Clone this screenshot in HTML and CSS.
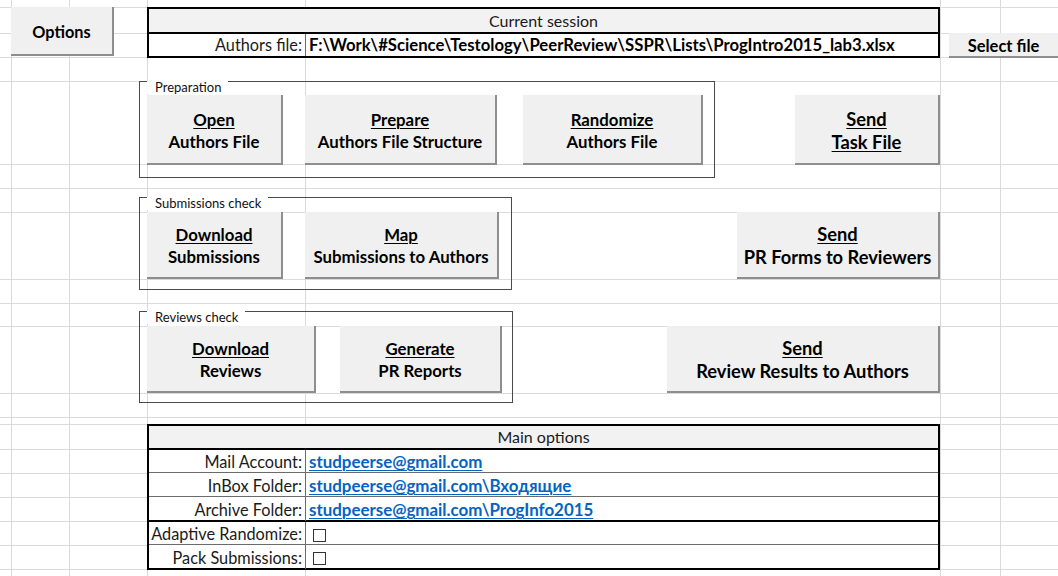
FILE: index.html
```html
<!DOCTYPE html>
<html lang="en">
<head>
<meta charset="utf-8">
<title>PeerReview – control sheet</title>
<link rel="stylesheet" href="styles.css">
</head>
<body>
<main class="sheet">

  <button class="btn btn-options" type="button">Options</button>

  <section class="session">
    <div class="head">Current session</div>
    <div class="row">
      <div class="label">Authors file:</div>
      <div class="value path">F:\Work\#Science\Testology\PeerReview\SSPR\Lists\ProgIntro2015_lab3.xlsx</div>
    </div>
  </section>

  <button class="btn btn-select" type="button">Select file</button>

  <!-- Preparation -->
  <div class="group group-prep">
    <span class="group-label">Preparation</span>
    <button class="btn btn-open" type="button"><u>Open</u><br>Authors File</button>
    <button class="btn btn-prepare" type="button"><u>Prepare</u><br>Authors File Structure</button>
    <button class="btn btn-randomize" type="button"><u>Randomize</u><br>Authors File</button>
  </div>
  <button class="btn btn-send btn-task" type="button"><u>Send</u><br><u>Task File</u></button>

  <!-- Submissions check -->
  <div class="group group-subm">
    <span class="group-label">Submissions check</span>
    <button class="btn btn-dl-subm" type="button"><u>Download</u><br>Submissions</button>
    <button class="btn btn-map" type="button"><u>Map</u><br>Submissions to Authors</button>
  </div>
  <button class="btn btn-send btn-forms" type="button"><u>Send</u><br>PR Forms to Reviewers</button>

  <!-- Reviews check -->
  <div class="group group-rev">
    <span class="group-label">Reviews check</span>
    <button class="btn btn-dl-rev" type="button"><u>Download</u><br>Reviews</button>
    <button class="btn btn-generate" type="button"><u>Generate</u><br>PR Reports</button>
  </div>
  <button class="btn btn-send btn-results" type="button"><u>Send</u><br>Review Results to Authors</button>

  <section class="opts">
    <div class="head">Main options</div>
    <div class="row r-thin">
      <div class="label">Mail Account:</div>
      <div class="value"><a class="link" href="#">studpeerse@gmail.com</a></div>
    </div>
    <div class="row r-thin r-tall">
      <div class="label">InBox Folder:</div>
      <div class="value"><a class="link" href="#">studpeerse@gmail.com\Входящие</a></div>
    </div>
    <div class="row r-thick r-tall">
      <div class="label">Archive Folder:</div>
      <div class="value"><a class="link" href="#">studpeerse@gmail.com\ProgInfo2015</a></div>
    </div>
    <div class="row r-thin">
      <div class="label">Adaptive Randomize:</div>
      <div class="value"><span class="check"></span></div>
    </div>
    <div class="row r-tall">
      <div class="label">Pack Submissions:</div>
      <div class="value"><span class="check"></span></div>
    </div>
  </section>

</main>
</body>
</html>
```

FILE: styles.css
```css
html, body {
  margin: 0;
  padding: 0;
  background: #fff;
}

/* worksheet: column widths and row heights of the sheet, gridlines drawn as hard-stop gradients */
.sheet {
  --grid: #dadada;
  position: relative;
  width: 1058px;
  height: 576px;
  overflow: hidden;
  display: grid;
  grid-template-columns: 11px 58px 78px 158px 635px 60px 58px;
  grid-template-rows: 7px 26px 24px 24px 83px 24px 24px 67px 24px 23px 67px 24px 7px 25px 24px 24px 24px 24px 24px 7px;
  font-family: "Lato", "Noto Sans", sans-serif;
  color: #111;
  background-color: #fff;
  background-image:
    linear-gradient(to right,
      transparent 11px, var(--grid) 11px 12px,
      transparent 12px 69px, var(--grid) 69px 70px,
      transparent 70px 147px, var(--grid) 147px 148px,
      transparent 148px 305px, var(--grid) 305px 306px,
      transparent 306px 940px, var(--grid) 940px 941px,
      transparent 941px 1000px, var(--grid) 1000px 1001px,
      transparent 1001px),
    linear-gradient(to bottom,
      transparent 7px, var(--grid) 7px 8px,
      transparent 8px 33px, var(--grid) 33px 34px,
      transparent 34px 57px, var(--grid) 57px 58px,
      transparent 58px 81px, var(--grid) 81px 82px,
      transparent 82px 164px, var(--grid) 164px 165px,
      transparent 165px 188px, var(--grid) 188px 189px,
      transparent 189px 212px, var(--grid) 212px 213px,
      transparent 213px 279px, var(--grid) 279px 280px,
      transparent 280px 303px, var(--grid) 303px 304px,
      transparent 304px 326px, var(--grid) 326px 327px,
      transparent 327px 393px, var(--grid) 393px 394px,
      transparent 394px 417px, var(--grid) 417px 418px,
      transparent 418px 424px, var(--grid) 424px 425px,
      transparent 425px 449px, var(--grid) 449px 450px,
      transparent 450px 473px, var(--grid) 473px 474px,
      transparent 474px 497px, var(--grid) 497px 498px,
      transparent 498px 521px, var(--grid) 521px 522px,
      transparent 522px 545px, var(--grid) 545px 546px,
      transparent 546px 569px, var(--grid) 569px 570px,
      transparent 570px);
}

/* ---------- form buttons ---------- */
.btn {
  box-sizing: border-box;
  margin: 0;
  padding: 0;
  border: 0;
  border-right: 2px solid #8e8e8e;
  border-bottom: 2px solid #8e8e8e;
  background: #f0f0f0;
  color: #000;
  font-family: "Lato", "Noto Sans", sans-serif;
  font-weight: 700;
  font-size: 16.8px;
  line-height: 22px;
  text-align: center;
  white-space: nowrap;
  cursor: pointer;
  justify-self: start;
  align-self: start;
}

.btn u {
  text-decoration-thickness: 1px;
  text-underline-offset: 2px;
}

.btn-options {
  grid-column: 2 / 4;
  grid-row: 2 / 4;
  width: 103px;
  height: 49px;
  padding-top: 2px;
  font-size: 16.3px;
}

.btn-select {
  grid-column: 6 / 8;
  grid-row: 3 / 4;
  margin-left: 9px;
  width: 111px;
  height: 25px;
  padding-top: 2px;
  line-height: 23px;
  font-size: 16.5px;
}

.btn-send {
  grid-column: 5 / 6;
  justify-self: end;
  font-size: 18.3px;
  line-height: 23px;
  padding-top: 2px;
}

.btn-task {
  grid-row: 5 / 6;
  margin-top: 14px;
  width: 145px;
  height: 70px;
  padding-top: 3px;
}

.btn-forms {
  grid-row: 8 / 9;
  width: 203px;
  height: 67px;
}

.btn-results {
  grid-row: 11 / 12;
  width: 273px;
  height: 67px;
}

/* ---------- group boxes ---------- */
.group {
  position: relative;
  box-sizing: border-box;
  grid-column: 3 / 6;
  justify-self: start;
  align-self: start;
  margin-left: 70px;
  display: flex;
  align-items: flex-start;
  gap: 22px;
  padding-left: 7px;
  border: 1px solid #4a4a4a;
}

.group-label {
  position: absolute;
  top: -1px;
  left: 7px;
  padding: 0 7px 0 8px;
  background: #fff;
  font-weight: 400;
  font-size: 13px;
  line-height: 13px;
  color: #111;
}

.group-prep {
  grid-row: 5 / 7;
  width: 576px;
  height: 97px;
  padding-top: 13px;
}

.group-prep .btn { height: 70px; padding-top: 3px; }
.btn-open { width: 136px; }
.btn-prepare { width: 192px; }
.btn-randomize { width: 180px; margin-left: 4px; }

.group-subm {
  grid-row: 7 / 10;
  margin-top: 9px;
  width: 373px;
  height: 93px;
  padding-top: 14px;
}

.group-subm .btn,
.group-rev .btn { height: 67px; padding-top: 2px; }
.btn-dl-subm { width: 136px; }
.btn-map { width: 194px; }

.group-rev {
  grid-row: 10 / 13;
  margin-top: 8px;
  width: 374px;
  height: 92px;
  padding-top: 14px;
  gap: 24px;
}

.btn-dl-rev { width: 169px; }
.btn-generate { width: 162px; }

/* ---------- bordered tables ---------- */
.session,
.opts {
  box-sizing: border-box;
  grid-column: 4 / 6;
  align-self: start;
  width: 793px;
  border: 2px solid #000;
  background: #fff;
  font-size: 16.3px;
}

.session {
  grid-row: 2 / 4;
  height: 51px;
}

.opts {
  grid-row: 14 / 21;
  height: 146px;
}

.head {
  box-sizing: border-box;
  background: #f2f2f2;
  border-bottom: 2px solid #000;
  text-align: center;
  color: #1a1a1a;
  font-size: 16px;
}

.session .head { height: 25px; line-height: 23px; }
.opts .head { height: 24px; line-height: 22px; }

.row {
  box-sizing: border-box;
  display: grid;
  grid-template-columns: 157px 1fr;
  height: 22px;
  line-height: 22px;
}

.label {
  box-sizing: border-box;
  border-right: 1px solid #6b6b6b;
  padding-right: 3px;
  text-align: right;
  white-space: nowrap;
  color: #1a1a1a;
}

.value {
  padding-left: 3px;
  white-space: nowrap;
}

.path {
  font-weight: 700;
  font-size: 16.7px;
  color: #000;
}

.opts .row { height: 23px; }
.opts .row.r-tall { height: 24px; line-height: 23px; }
.opts .row.r-thin { border-bottom: 1px solid #6b6b6b; }
.opts .row.r-thick { height: 25px; border-bottom: 2px solid #000; }
.opts .label,
.opts .value { padding-top: 1px; }

.link {
  color: #0563c1;
  font-weight: 700;
  font-size: 16.9px;
  text-decoration: underline;
  text-decoration-thickness: 1px;
  text-underline-offset: 2px;
}

.check {
  display: inline-block;
  box-sizing: border-box;
  width: 13px;
  height: 13px;
  margin-left: 4px;
  margin-top: 6px;
  vertical-align: top;
  border: 1px solid #333;
  background: #fff;
}
```
